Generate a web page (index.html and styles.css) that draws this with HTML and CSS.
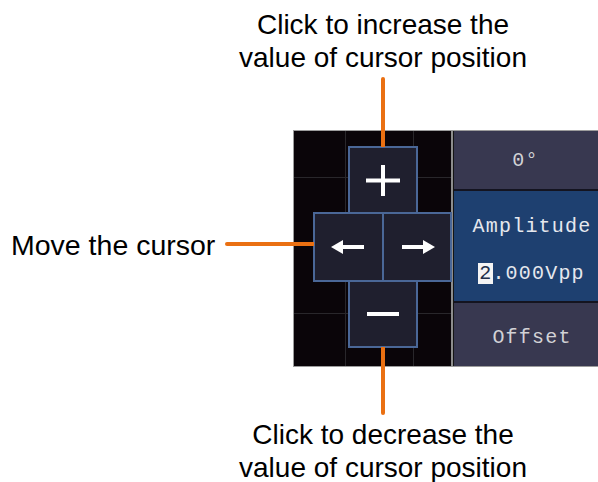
FILE: index.html
```html
<!DOCTYPE html>
<html>
<head>
<meta charset="utf-8">
<link rel="stylesheet" href="styles.css">
</head>
<body>
<div class="page">
  <div class="note note-top">Click to increase the<br>value of cursor position</div>
  <div class="middle">
    <div class="label">Move the cursor</div>
    <div class="screen">
      <div class="scope"></div>
      <div class="divider"></div>
      <div class="panel">
        <div class="item item-phase">0°</div>
        <div class="item item-sel">
          <div class="line">Amplitude</div>
          <div class="line"><span class="cur">2</span>.000Vpp</div>
        </div>
        <div class="item item-off">Offset</div>
      </div>
      <div class="pad">
        <div class="key key-up">
          <svg width="34" height="31" viewBox="0 0 34 31"><path d="M0 15.5H34M17 0V31" stroke="#fff" stroke-width="4" fill="none"/></svg>
        </div>
        <div class="key key-left">
          <svg width="33" height="14" viewBox="0 0 33 14"><path d="M0 7L12 0V14Z" fill="#fff"/><rect x="10" y="5" width="23" height="4" fill="#fff"/></svg>
        </div>
        <div class="key key-right">
          <svg width="33" height="14" viewBox="0 0 33 14"><path d="M33 7L21 0V14Z" fill="#fff"/><rect x="0" y="5" width="23" height="4" fill="#fff"/></svg>
        </div>
        <div class="key key-down">
          <svg width="32" height="4" viewBox="0 0 32 4"><rect x="0" y="0" width="32" height="4" fill="#fff"/></svg>
        </div>
      </div>
    </div>
  </div>
  <div class="note note-bottom">Click to decrease the<br>value of cursor position</div>
  <div class="lead lead-top"></div>
  <div class="lead lead-left"></div>
  <div class="lead lead-bottom"></div>
</div>
</body>
</html>
```
FILE: styles.css
```css
html, body {
  margin: 0;
  padding: 0;
  background: #ffffff;
}
.page {
  position: relative;
  width: 598px;
  height: 482px;
  overflow: hidden;
  padding-top: 8px;
  box-sizing: border-box;
  font-family: "Liberation Sans", Arial, sans-serif;
  color: #000;
}
.note {
  margin-left: 168px;
  width: 430px;
  text-align: center;
  font-size: 28px;
  line-height: 33px;
}
.middle {
  margin-top: 56px;
  display: flex;
  height: 237px;
}
.label {
  width: 282px;
  padding-left: 11px;
  padding-top: 99px;
  font-size: 28.5px;
  line-height: 33px;
  white-space: nowrap;
}
.screen {
  position: relative;
  flex: 1;
  display: flex;
  border: 1px solid #9c9c9c;
  border-right: none;
}
.scope {
  width: 157px;
  background-color: #0a0509;
  background-image:
    linear-gradient(to right, #29272b 1px, transparent 1px),
    linear-gradient(to bottom, #29272b 1px, transparent 1px);
  background-size: 68px 68px;
  background-position: 51px 46px;
}
.divider {
  width: 2px;
  background: #8d8d8d;
  border-right: 1px solid #141414;
}
.panel {
  flex: 1;
  display: flex;
  flex-direction: column;
  background: #141420;
  gap: 2px;
  font-family: "Liberation Mono", "Courier New", monospace;
  font-size: 20px;
  letter-spacing: 1.2px;
}
.item {
  display: flex;
  align-items: center;
  justify-content: center;
  padding-left: 12px;
  background: #383850;
  color: #d2d2d6;
  box-sizing: border-box;
}
.item-phase {
  height: 58px;
  padding-right: 13px;
}
.item-sel {
  height: 110px;
  flex-direction: column;
  gap: 23px;
  padding-top: 8px;
  background: #1e4070;
  color: #e6e8ee;
}
.item-off {
  flex: 1;
  padding-top: 6px;
}
.line {
  line-height: 24px;
}
.cur {
  display: inline-block;
  background: #f4f4f4;
  color: #22304a;
  line-height: 21px;
  padding: 0 1px 0 1px;
  margin-left: -1px;
  margin-right: -1px;
}
.pad {
  position: absolute;
  left: 20px;
  top: 16px;
  display: grid;
  grid-template-columns: 35px 34px 34px 34px;
  grid-template-rows: 66px 68px 66px;
}
.key {
  margin: -1px;
  background: #1f1f2e;
  border: 2px solid #4a6797;
  display: flex;
  align-items: center;
  justify-content: center;
}
.key svg {
  display: block;
}
.key-up { grid-column: 2 / 4; grid-row: 1; }
.key-left { grid-column: 1 / 3; grid-row: 2; padding-right: 3px; }
.key-right { grid-column: 3 / 5; grid-row: 2; padding-left: 3px; }
.key-down { grid-column: 2 / 4; grid-row: 3; }
.lead {
  position: absolute;
  background: #ea7012;
}
.lead-top {
  left: 381px;
  top: 77px;
  width: 4px;
  height: 70px;
  border-radius: 2px 2px 0 0;
}
.lead-bottom {
  left: 381px;
  top: 347px;
  width: 4px;
  height: 68px;
  border-radius: 0 0 2px 2px;
}
.lead-left {
  left: 225px;
  top: 242px;
  width: 89px;
  height: 4px;
  border-radius: 2px 0 0 2px;
}
.note-bottom {
  margin-top: 51px;
}
```
